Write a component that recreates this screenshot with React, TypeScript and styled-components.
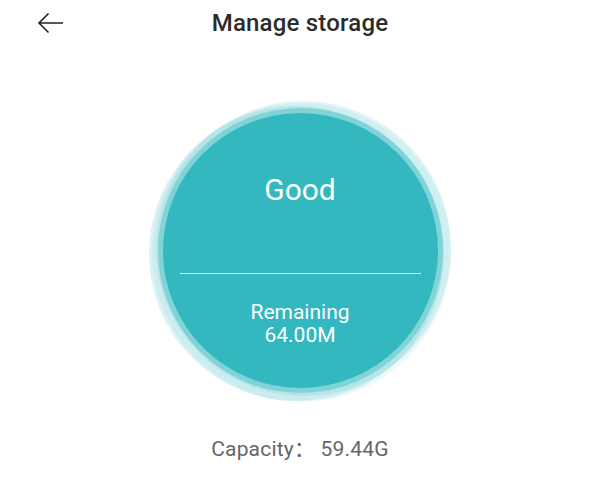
import styled, { createGlobalStyle } from 'styled-components';

const GlobalStyle = createGlobalStyle`
	html, body {
		margin: 0;
		padding: 0;
		background: #ffffff;
		font-family: Roboto, "Noto Sans CJK SC", sans-serif;
	}
`;

const Page = styled.div`
	width: 600px;
	height: 500px;
	display: flex;
	flex-direction: column;
	align-items: center;
	background: #ffffff;
`;

const Header = styled.header`
	position: relative;
	width: 100%;
	height: 46px;
	display: flex;
	align-items: center;
	justify-content: center;
`;

const BackButton = styled.button`
	position: absolute;
	left: 34px;
	top: 10px;
	width: 32px;
	height: 26px;
	padding: 0;
	border: none;
	background: none;
	display: flex;
	align-items: center;
	justify-content: center;
	cursor: pointer;
`;

const Title = styled.h1`
	margin: 0;
	font-size: 24px;
	font-weight: 500;
	color: #2b2b2b;
	letter-spacing: 0.2px;
`;

const Gauge = styled.div`
	margin-top: 67px;
	width: 275px;
	height: 275px;
	border-radius: 50%;
	background: #33b8c0;
	display: flex;
	flex-direction: column;
	align-items: center;
	color: #ffffff;
	box-shadow:
		0 0 0 5px rgba(51, 184, 192, 0.4),
		-4px 3px 0 10px rgba(51, 184, 192, 0.18),
		3px -2px 0 10px rgba(51, 184, 192, 0.14),
		1px 2px 0 12px rgba(51, 184, 192, 0.09);
`;

const Status = styled.div`
	margin-top: 59px;
	font-size: 30px;
	line-height: 36px;
`;

const Divider = styled.div`
	margin-top: 65px;
	width: 241px;
	height: 1px;
	background: rgba(255, 255, 255, 0.85);
`;

const Remaining = styled.div`
	margin-top: 27px;
	font-size: 21px;
	line-height: 23px;
	text-align: center;
`;

const Capacity = styled.div`
	margin-top: 44px;
	font-size: 21px;
	color: #666666;
	letter-spacing: 0.2px;
`;

export default function App() {
	return (
		<Page>
			<GlobalStyle />
			<Header>
				<BackButton aria-label={ 'Back' }>
					<svg width={ 28 } height={ 22 } viewBox={ '0 0 28 22' } fill={ 'none' }>
						<path d={ 'M27 11H3.5M12.5 1.5L3 11l9.5 9.5' } stroke={ '#222' } strokeWidth={ 1.6 } />
					</svg>
				</BackButton>
				<Title>{ 'Manage storage' }</Title>
			</Header>
			<Gauge>
				<Status>{ 'Good' }</Status>
				<Divider />
				<Remaining>
					{ 'Remaining' }
					<br />
					{ '64.00M' }
				</Remaining>
			</Gauge>
			<Capacity>{ 'Capacity：' }&nbsp;{ '59.44G' }</Capacity>
		</Page>
	);
}
